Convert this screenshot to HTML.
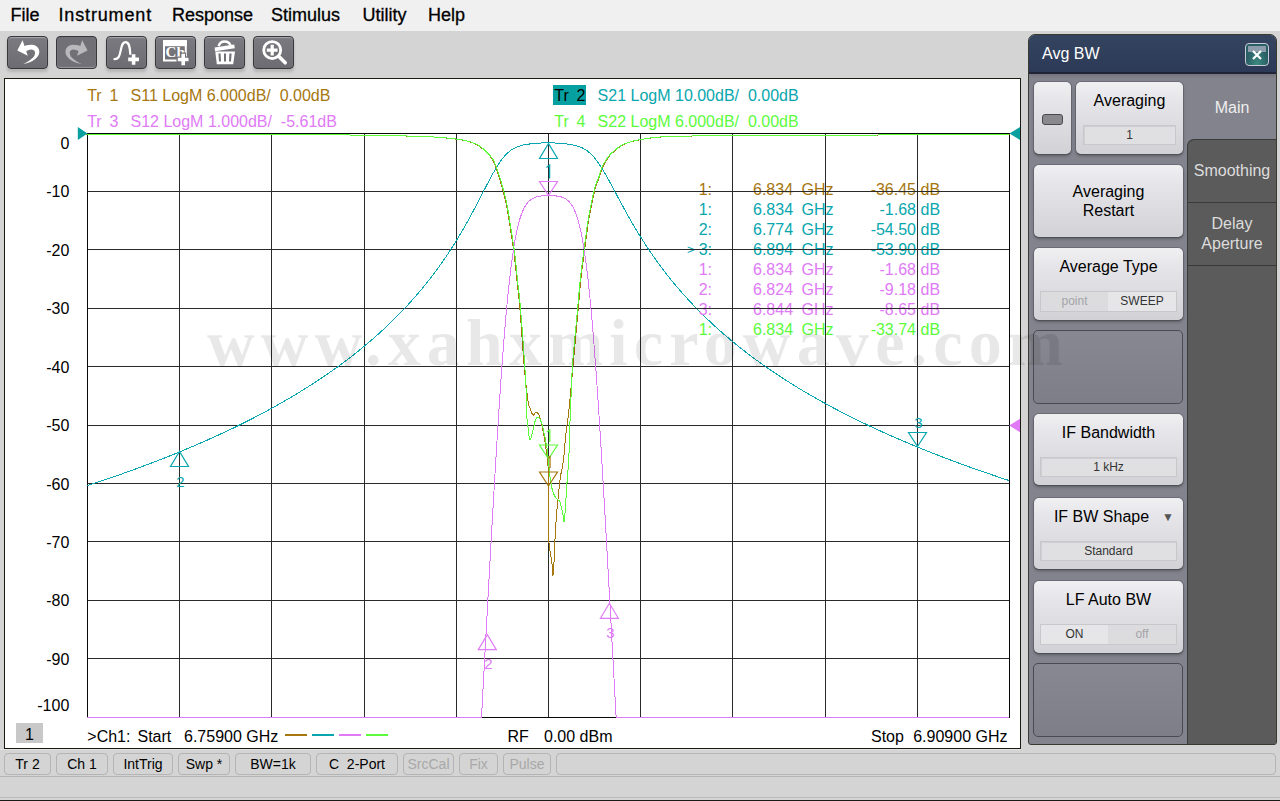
<!DOCTYPE html>
<html><head><meta charset="utf-8"><style>
*{margin:0;padding:0;box-sizing:border-box}
html,body{width:1280px;height:801px;overflow:hidden;background:#d4d4d4;font-family:"Liberation Sans",sans-serif}
.a{position:absolute}
#menu{left:0;top:0;width:1280px;height:31px;background:#f0f0f0}
#menu span{position:absolute;top:5px;font-size:18px;color:#000;line-height:20px;-webkit-text-stroke:0.3px #000}
.tb{position:absolute;top:36px;width:41px;height:33px;border-radius:4px;background:linear-gradient(#7a7a80,#6c6c72);border:1px solid #38383c;box-shadow:inset 0 1px 1px rgba(255,255,255,.35),0 3px 3px rgba(0,0,0,.15)}
.tbd{background:#707076;box-shadow:inset 0 -1px 1px rgba(255,255,255,.3)}
#chart{left:4px;top:78px;width:1017px;height:671px;background:#fff;border:1px solid #1a1a10}
#panel{left:1028px;top:34px;width:249px;height:711px;background:#82838c;border:1px solid #3a3a30;border-radius:7px 7px 3px 3px;overflow:hidden}
#hdr{left:0;top:0;width:247px;height:39px;background:linear-gradient(#34445f,#2c3a57);border-bottom:2px solid #1f2536;box-shadow:0 2px 3px rgba(0,0,0,.12)}
#tabs{left:158px;top:104px;width:89px;height:606px;background:#5b5b5b;border-left:1px solid #3a3a3a;border-top:1px solid #3a3a3a;border-radius:7px 0 0 0}
.btn{position:absolute;background:linear-gradient(#f0f0f3,#e6e6ea 25%,#d2d2d6);border-radius:5px;box-shadow:0 0 0 1px rgba(70,70,80,.35),0 1px 0 #55565c,0 2px 3px rgba(0,0,0,.3);color:#000;font-size:16px;text-align:center}
.emp{position:absolute;border:1px solid #4a4b50;border-radius:5px;background:linear-gradient(#878891,#7d7e87)}
.val{position:absolute;left:7px;width:93px;height:20px;background:#e0e0e2;border:1px solid #c8c8cc;box-shadow:inset 1px 1px 0 rgba(0,0,0,.07);font-size:12px;line-height:18px;color:#333}
.sb{position:absolute;top:753px;height:22px;border:1px solid #b4b4b4;border-radius:4px;font-size:14px;line-height:21px;text-align:center;color:#000;background:#d4d4d4}
</style></head><body>
<div id="menu" class="a"><span style="left:10.5px">File</span><span style="left:58.5px;letter-spacing:0.85px">Instrument</span><span style="left:172px">Response</span><span style="left:271px">Stimulus</span><span style="left:362.5px">Utility</span><span style="left:428px">Help</span></div>
<div class="tb" style="left:7px"></div><div class="tb" style="left:106px"></div><div class="tb" style="left:155px"></div><div class="tb" style="left:204px"></div><div class="tb" style="left:253px"></div><div class="tb tbd" style="left:56px"></div><svg class="a" style="left:0;top:0" width="300" height="80" viewBox="0 0 300 80"><path d="M17.3 50.4 L22.6 40.3 L27.8 55.8 Z" fill="#fff"/><path d="M22.5 47.2 C29 43.5 37.5 43.8 39.2 50.5 C40.5 56.5 33 62.5 23 64.2 C31 60.2 35.5 56.5 35 52.2 C34.3 48.8 30 48.6 25.5 51.5 Z" fill="#fff"/><g transform="translate(104.8,0) scale(-1,1)" fill="#b9b9bd"><path d="M17.3 50.4 L22.6 40.3 L27.8 55.8 Z"/><path d="M22.5 47.2 C29 43.5 37.5 43.8 39.2 50.5 C40.5 56.5 33 62.5 23 64.2 C31 60.2 35.5 56.5 35 52.2 C34.3 48.8 30 48.6 25.5 51.5 Z"/></g><path d="M114.5 59.2 C119 59 119.8 55 120.8 50 C121.8 45 122.5 42.2 125.5 42.2 C129 42.2 129.8 46 130.3 54" fill="none" stroke="#fff" stroke-width="2.2" stroke-linecap="round"/><path d="M128.2 57.6 H139 V61.2 H128.2 Z M131.8 54.2 H135.4 V64.8 H131.8 Z" fill="#fff" stroke="#6c6c72" stroke-width="0"/><path d="M164 41 H185.8 V57 M177 60.6 H164 V41" fill="none" stroke="#fff" stroke-width="2"/><rect x="163" y="40" width="23.8" height="6.2" fill="#fff"/><text x="165.6" y="57.2" font-family="'Liberation Serif',serif" font-weight="bold" font-size="15" fill="#fff">Ch</text><path d="M176.5 56.5 H189.8 V62.5 H176.5 Z M180.3 52.5 H186 V66.5 H180.3 Z" fill="#707076"/><path d="M177.8 57.7 H188.5 V61.3 H177.8 Z M181.4 53.8 H185 V65.2 H181.4 Z" fill="#fff"/><path d="M218.6 46.2 C219.5 42.6 221.8 41.5 224.5 41.5 C227.5 41.5 229.6 42.4 230.4 45.3" fill="none" stroke="#fff" stroke-width="2.4"/><path d="M214.6 47.6 L234.2 44.6 L234.8 48.2 L215 51.2 Z" fill="#fff"/><path d="M215.3 51.6 H235 L233.2 64.2 H216.8 Z" fill="#fff"/><path d="M218.4 53.6 H220.6 L221 61.6 H219 Z M224 53.6 H226 V61.6 H224 Z M229.4 53.6 H231.6 L231 61.6 H229 Z" fill="#707076"/><circle cx="272.2" cy="50.1" r="8.5" fill="none" stroke="#fff" stroke-width="2.8"/><path d="M279.2 56.8 L285.2 62.8" stroke="#fff" stroke-width="3.6" stroke-linecap="round"/><path d="M266.8 48.5 H277.6 V51.7 H266.8 Z M270.6 44.7 H273.8 V55.5 H270.6 Z" fill="#fff"/></svg>
<div id="chart" class="a"></div>
<svg width="1280" height="801" viewBox="0 0 1280 801" style="position:absolute;left:0;top:0" font-family='"Liberation Sans", sans-serif'>
<path d="M87.5 133 V718 M179.5 133 V718 M271.5 133 V718 M364.5 133 V718 M456.5 133 V718 M548.5 133 V718 M640.5 133 V718 M732.5 133 V718 M825.5 133 V718 M917.5 133 V718 M1009.5 133 V718 M87 133.5 H1010 M87 191.5 H1010 M87 249.5 H1010 M87 308.5 H1010 M87 366.5 H1010 M87 425.5 H1010 M87 483.5 H1010 M87 541.5 H1010 M87 600.5 H1010 M87 658.5 H1010 M87 717.5 H1010" stroke="#2a2a2a" stroke-width="1" fill="none" shape-rendering="crispEdges"/>
<path d="M87.5 133 V718 M1009.5 133 V718 M87 133.5 H1010 M87 717.5 H1010" stroke="#080808" stroke-width="1" fill="none" shape-rendering="crispEdges"/>
<polyline points="86.4,134.5 102.0,134.5 124.1,134.5 149.7,134.5 175.8,134.5 199.4,134.5 220.2,134.5 240.3,134.5 260.0,134.5 279.6,134.5 299.4,134.6 320.2,134.7 341.8,134.9 363.0,135.2 382.6,135.5 399.4,135.8 413.0,136.2 424.2,136.6 433.6,137.0 441.8,137.6 449.4,138.3 456.2,139.1 461.7,139.9 466.3,140.9 470.4,142.1 474.4,143.6 478.2,145.6 481.6,148.0 484.5,150.5 487.1,153.1 489.4,155.5 491.2,157.6 492.4,159.4 493.4,161.3 494.3,163.4 495.4,166.0 496.6,169.2 497.8,172.9 499.1,176.9 500.3,181.0 501.4,185.0 502.5,188.8 503.5,192.4 504.4,196.2 505.4,200.3 506.4,205.0 507.4,210.5 508.5,216.7 509.5,223.2 510.5,229.4 511.4,235.0 512.1,239.7 512.8,243.9 513.3,247.8 513.9,251.8 514.4,256.0 514.9,260.5 515.4,265.2 515.9,269.9 516.4,274.9 516.9,280.0 517.4,284.9 518.0,289.7 518.6,294.8 519.2,300.8 519.9,308.5 520.7,318.6 521.6,330.7 522.5,343.6 523.4,355.9 524.2,366.4 525.0,375.1 525.8,382.8 526.6,389.6 527.3,395.3 527.9,400.0 528.4,403.3 528.8,405.1 529.1,406.1 529.5,406.9 529.9,408.0 530.4,409.6 531.0,411.3 531.7,412.9 532.3,414.2 532.9,415.0 533.5,415.0 534.1,414.4 534.7,413.5 535.3,412.7 535.9,412.4 536.5,412.4 537.1,412.5 537.6,412.8 538.2,413.6 538.9,415.0 539.7,417.2 540.5,420.0 541.3,423.2 542.1,426.6 542.9,430.0 543.6,433.4 544.2,437.1 544.8,440.8 545.4,444.5 545.9,448.0 546.4,451.2 546.8,454.3 547.3,457.3 547.6,460.5 547.9,464.0 548.1,468.0 548.2,472.4 548.3,476.9 548.3,481.2 548.4,485.0 548.5,487.8 548.6,489.8 548.7,491.7 548.8,494.5 548.9,499.0 548.9,506.0 548.8,514.9 548.7,524.5 548.7,533.6 548.9,541.0 549.3,546.4 549.9,550.7 550.5,554.2 551.2,557.4 551.7,560.6 552.1,564.6 552.4,569.1 552.7,573.0 553.0,575.3 553.3,575.0 553.6,571.2 553.9,564.5 554.3,556.3 554.6,548.1 554.9,541.0 555.2,535.1 555.5,529.5 555.9,524.3 556.2,519.4 556.5,515.0 556.8,511.3 557.1,508.2 557.3,505.4 557.6,502.5 558.0,499.0 558.4,494.7 558.9,490.0 559.5,485.0 560.0,480.3 560.6,476.0 561.2,472.5 561.8,469.6 562.4,466.8 562.9,463.7 563.5,460.0 564.0,455.4 564.5,450.2 564.9,444.7 565.4,439.2 565.9,434.0 566.4,429.4 567.0,425.2 567.6,420.9 568.2,416.0 568.9,410.0 569.6,402.8 570.4,394.7 571.2,385.8 572.1,376.3 573.0,366.4 574.0,355.3 575.1,342.9 576.3,330.2 577.3,318.4 578.2,308.5 578.9,300.9 579.4,295.1 579.8,290.1 580.2,285.3 580.8,280.0 581.5,274.0 582.2,267.9 583.0,261.8 583.8,255.8 584.6,250.0 585.3,244.3 586.1,238.6 586.8,233.1 587.5,228.0 588.1,223.6 588.7,220.1 589.1,217.3 589.6,214.9 590.1,212.6 590.6,210.0 591.2,207.0 591.8,203.9 592.5,200.7 593.1,197.7 593.7,195.0 594.2,192.6 594.7,190.5 595.2,188.6 595.7,186.8 596.2,185.0 596.8,183.4 597.4,182.0 598.0,180.6 598.6,179.1 599.3,177.4 600.0,175.4 600.7,173.1 601.4,170.8 602.2,168.4 603.1,166.2 604.2,164.0 605.5,161.9 606.8,159.8 608.1,157.9 609.3,156.2 610.3,154.9 611.3,153.9 612.2,153.0 613.2,152.2 614.3,151.2 615.6,150.1 617.1,148.9 618.6,147.7 620.2,146.6 621.8,145.6 623.5,144.7 625.2,143.9 626.9,143.2 628.7,142.5 630.6,141.9 632.4,141.4 634.3,140.9 636.2,140.5 638.3,140.1 640.6,139.7 643.1,139.2 645.8,138.8 648.6,138.3 651.9,137.9 655.6,137.5 659.1,137.2 662.2,136.9 666.2,136.6 671.9,136.4 680.6,136.2 692.9,136.0 708.2,135.9 725.2,135.8 743.1,135.7 760.6,135.6 778.3,135.5 796.8,135.5 815.6,135.4 833.7,135.4 850.6,135.3 865.6,135.2 879.1,135.0 892.2,134.9 905.7,134.7 920.6,134.6 938.6,134.5 959.1,134.5 979.5,134.5 997.2,134.5 1009.6,134.5" fill="none" stroke="#a6760f" stroke-width="1" shape-rendering="crispEdges"/>
<polyline points="87.0,485.8 88.0,485.4 89.0,485.1 90.0,484.8 91.0,484.5 92.0,484.1 93.0,483.8 94.0,483.5 95.0,483.1 96.0,482.8 97.0,482.5 98.0,482.1 99.0,481.8 100.0,481.5 101.0,481.1 102.0,480.8 103.0,480.4 104.0,480.1 105.0,479.8 106.0,479.4 107.0,479.1 108.0,478.7 109.0,478.4 110.0,478.0 111.0,477.7 112.0,477.4 113.0,477.0 114.0,476.7 115.0,476.3 116.0,476.0 117.0,475.6 118.0,475.3 119.0,474.9 120.0,474.6 121.0,474.2 122.0,473.9 123.0,473.5 124.0,473.1 125.0,472.8 126.0,472.4 127.0,472.1 128.0,471.7 129.0,471.4 130.0,471.0 131.0,470.6 132.0,470.3 133.0,469.9 134.0,469.5 135.0,469.2 136.0,468.8 137.0,468.4 138.0,468.1 139.0,467.7 140.0,467.3 141.0,467.0 142.0,466.6 143.0,466.2 144.0,465.8 145.0,465.5 146.0,465.1 147.0,464.7 148.0,464.3 149.0,464.0 150.0,463.6 151.0,463.2 152.0,462.8 153.0,462.4 154.0,462.1 155.0,461.7 156.0,461.3 157.0,460.9 158.0,460.5 159.0,460.1 160.0,459.7 161.0,459.3 162.0,459.0 163.0,458.6 164.0,458.2 165.0,457.8 166.0,457.4 167.0,457.0 168.0,456.6 169.0,456.2 170.0,455.8 171.0,455.4 172.0,455.0 173.0,454.6 174.0,454.2 175.0,453.8 176.0,453.4 177.0,453.0 178.0,452.5 179.0,452.1 180.0,451.7 181.0,451.3 182.0,450.9 183.0,450.5 184.0,450.1 185.0,449.7 186.0,449.2 187.0,448.8 188.0,448.4 189.0,448.0 190.0,447.6 191.0,447.1 192.0,446.7 193.0,446.3 194.0,445.9 195.0,445.4 196.0,445.0 197.0,444.6 198.0,444.1 199.0,443.7 200.0,443.3 201.0,442.8 202.0,442.4 203.0,442.0 204.0,441.5 205.0,441.1 206.0,440.6 207.0,440.2 208.0,439.7 209.0,439.3 210.0,438.8 211.0,438.4 212.0,437.9 213.0,437.5 214.0,437.0 215.0,436.6 216.0,436.1 217.0,435.7 218.0,435.2 219.0,434.8 220.0,434.3 221.0,433.8 222.0,433.4 223.0,432.9 224.0,432.4 225.0,432.0 226.0,431.5 227.0,431.0 228.0,430.6 229.0,430.1 230.0,429.6 231.0,429.1 232.0,428.6 233.0,428.2 234.0,427.7 235.0,427.2 236.0,426.7 237.0,426.2 238.0,425.7 239.0,425.2 240.0,424.8 241.0,424.3 242.0,423.8 243.0,423.3 244.0,422.8 245.0,422.3 246.0,421.8 247.0,421.3 248.0,420.8 249.0,420.3 250.0,419.7 251.0,419.2 252.0,418.7 253.0,418.2 254.0,417.7 255.0,417.2 256.0,416.7 257.0,416.1 258.0,415.6 259.0,415.1 260.0,414.6 261.0,414.0 262.0,413.5 263.0,413.0 264.0,412.4 265.0,411.9 266.0,411.4 267.0,410.8 268.0,410.3 269.0,409.7 270.0,409.2 271.0,408.7 272.0,408.1 273.0,407.6 274.0,407.0 275.0,406.4 276.0,405.9 277.0,405.3 278.0,404.8 279.0,404.2 280.0,403.6 281.0,403.1 282.0,402.5 283.0,401.9 284.0,401.3 285.0,400.8 286.0,400.2 287.0,399.6 288.0,399.0 289.0,398.4 290.0,397.9 291.0,397.3 292.0,396.7 293.0,396.1 294.0,395.5 295.0,394.9 296.0,394.3 297.0,393.7 298.0,393.1 299.0,392.5 300.0,391.8 301.0,391.2 302.0,390.6 303.0,390.0 304.0,389.4 305.0,388.7 306.0,388.1 307.0,387.5 308.0,386.9 309.0,386.2 310.0,385.6 311.0,384.9 312.0,384.3 313.0,383.7 314.0,383.0 315.0,382.4 316.0,381.7 317.0,381.0 318.0,380.4 319.0,379.7 320.0,379.1 321.0,378.4 322.0,377.7 323.0,377.0 324.0,376.4 325.0,375.7 326.0,375.0 327.0,374.3 328.0,373.6 329.0,372.9 330.0,372.2 331.0,371.5 332.0,370.8 333.0,370.1 334.0,369.4 335.0,368.7 336.0,368.0 337.0,367.3 338.0,366.5 339.0,365.8 340.0,365.1 341.0,364.4 342.0,363.6 343.0,362.9 344.0,362.1 345.0,361.4 346.0,360.6 347.0,359.9 348.0,359.1 349.0,358.3 350.0,357.6 351.0,356.8 352.0,356.0 353.0,355.3 354.0,354.5 355.0,353.7 356.0,352.9 357.0,352.1 358.0,351.3 359.0,350.5 360.0,349.7 361.0,348.9 362.0,348.1 363.0,347.2 364.0,346.4 365.0,345.6 366.0,344.7 367.0,343.9 368.0,343.1 369.0,342.2 370.0,341.4 371.0,340.5 372.0,339.6 373.0,338.8 374.0,337.9 375.0,337.0 376.0,336.1 377.0,335.2 378.0,334.4 379.0,333.5 380.0,332.5 381.0,331.6 382.0,330.7 383.0,329.8 384.0,328.9 385.0,327.9 386.0,327.0 387.0,326.1 388.0,325.1 389.0,324.2 390.0,323.2 391.0,322.2 392.0,321.2 393.0,320.3 394.0,319.3 395.0,318.3 396.0,317.3 397.0,316.3 398.0,315.3 399.0,314.3 400.0,313.2 401.0,312.2 402.0,311.1 403.0,310.1 404.0,309.0 405.0,308.0 406.0,306.9 407.0,305.8 408.0,304.8 409.0,303.7 410.0,302.6 411.0,301.5 412.0,300.3 413.0,299.2 414.0,298.1 415.0,296.9 416.0,295.8 417.0,294.6 418.0,293.5 419.0,292.3 420.0,291.1 421.0,289.9 422.0,288.7 423.0,287.5 424.0,286.3 425.0,285.0 426.0,283.8 427.0,282.5 428.0,281.3 429.0,280.0 430.0,278.7 431.0,277.4 432.0,276.1 433.0,274.8 434.0,273.5 435.0,272.2 436.0,270.8 437.0,269.4 438.0,268.1 439.0,266.7 440.0,265.3 441.0,263.9 442.0,262.5 443.0,261.0 444.0,259.6 445.0,258.1 446.0,256.7 447.0,255.2 448.0,253.7 449.0,252.2 450.0,250.6 451.0,249.1 452.0,247.5 453.0,246.0 454.0,244.4 455.0,242.8 456.0,241.2 457.0,239.6 458.0,237.9 459.0,236.3 460.0,234.6 461.0,232.9 462.0,231.2 463.0,229.5 464.0,227.7 465.0,226.0 466.0,224.2 467.0,222.5 468.0,220.7 469.0,218.9 470.0,217.0 471.0,215.2 472.0,213.4 473.0,211.5 474.0,209.6 475.0,207.7 476.0,205.8 477.0,203.9 478.0,202.0 479.0,200.1 480.0,198.2 481.0,196.2 482.0,194.3 483.0,192.3 484.0,190.4 485.0,188.5 486.0,186.5 487.0,184.6 488.0,182.7 489.0,180.8 490.0,178.9 491.0,177.1 492.0,175.2 493.0,173.4 494.0,171.7 495.0,169.9 496.0,168.3 497.0,166.6 498.0,165.0 499.0,163.5 500.0,162.0 501.0,160.6 502.0,159.3 503.0,158.0 504.0,156.8 505.0,155.6 506.0,154.6 507.0,153.6 508.0,152.6 509.0,151.8 510.0,151.0 511.0,150.2 512.0,149.6 513.0,148.9 514.0,148.4 515.0,147.9 516.0,147.4 517.0,147.0 518.0,146.6 519.0,146.2 520.0,145.9 521.0,145.6 522.0,145.4 523.0,145.1 524.0,144.9 525.0,144.7 526.0,144.5 527.0,144.4 528.0,144.2 529.0,144.1 530.0,143.9 531.0,143.8 532.0,143.7 533.0,143.6 534.0,143.5 535.0,143.4 536.0,143.3 537.0,143.2 538.0,143.2 539.0,143.1 540.0,143.0 541.0,143.0 542.0,142.9 543.0,142.9 544.0,142.9 545.0,142.8 546.0,142.8 547.0,142.8 548.0,142.8 549.0,142.8 550.0,142.8 551.0,142.8 552.0,142.9 553.0,142.9 554.0,142.9 555.0,143.0 556.0,143.0 557.0,143.1 558.0,143.1 559.0,143.2 560.0,143.3 561.0,143.4 562.0,143.5 563.0,143.5 564.0,143.6 565.0,143.8 566.0,143.9 567.0,144.0 568.0,144.1 569.0,144.3 570.0,144.4 571.0,144.6 572.0,144.8 573.0,145.0 574.0,145.2 575.0,145.4 576.0,145.7 577.0,145.9 578.0,146.2 579.0,146.6 580.0,146.9 581.0,147.3 582.0,147.8 583.0,148.3 584.0,148.8 585.0,149.4 586.0,150.0 587.0,150.7 588.0,151.5 589.0,152.3 590.0,153.1 591.0,154.1 592.0,155.1 593.0,156.1 594.0,157.3 595.0,158.5 596.0,159.7 597.0,161.1 598.0,162.4 599.0,163.9 600.0,165.4 601.0,166.9 602.0,168.5 603.0,170.1 604.0,171.8 605.0,173.5 606.0,175.3 607.0,177.0 608.0,178.8 609.0,180.6 610.0,182.5 611.0,184.3 612.0,186.2 613.0,188.0 614.0,189.9 615.0,191.8 616.0,193.6 617.0,195.5 618.0,197.4 619.0,199.2 620.0,201.1 621.0,203.0 622.0,204.8 623.0,206.6 624.0,208.5 625.0,210.3 626.0,212.1 627.0,213.9 628.0,215.7 629.0,217.4 630.0,219.2 631.0,220.9 632.0,222.7 633.0,224.4 634.0,226.1 635.0,227.8 636.0,229.4 637.0,231.1 638.0,232.8 639.0,234.4 640.0,236.0 641.0,237.6 642.0,239.2 643.0,240.8 644.0,242.3 645.0,243.9 646.0,245.4 647.0,246.9 648.0,248.4 649.0,249.9 650.0,251.4 651.0,252.9 652.0,254.3 653.0,255.8 654.0,257.2 655.0,258.6 656.0,260.0 657.0,261.4 658.0,262.8 659.0,264.2 660.0,265.5 661.0,266.9 662.0,268.2 663.0,269.5 664.0,270.8 665.0,272.1 666.0,273.4 667.0,274.7 668.0,276.0 669.0,277.2 670.0,278.5 671.0,279.7 672.0,281.0 673.0,282.2 674.0,283.4 675.0,284.6 676.0,285.8 677.0,287.0 678.0,288.1 679.0,289.3 680.0,290.5 681.0,291.6 682.0,292.8 683.0,293.9 684.0,295.0 685.0,296.1 686.0,297.2 687.0,298.3 688.0,299.4 689.0,300.5 690.0,301.6 691.0,302.7 692.0,303.7 693.0,304.8 694.0,305.8 695.0,306.9 696.0,307.9 697.0,308.9 698.0,309.9 699.0,311.0 700.0,312.0 701.0,313.0 702.0,314.0 703.0,314.9 704.0,315.9 705.0,316.9 706.0,317.9 707.0,318.8 708.0,319.8 709.0,320.7 710.0,321.7 711.0,322.6 712.0,323.6 713.0,324.5 714.0,325.4 715.0,326.3 716.0,327.2 717.0,328.1 718.0,329.0 719.0,329.9 720.0,330.8 721.0,331.7 722.0,332.6 723.0,333.4 724.0,334.3 725.0,335.2 726.0,336.0 727.0,336.9 728.0,337.7 729.0,338.6 730.0,339.4 731.0,340.3 732.0,341.1 733.0,341.9 734.0,342.7 735.0,343.6 736.0,344.4 737.0,345.2 738.0,346.0 739.0,346.8 740.0,347.6 741.0,348.4 742.0,349.2 743.0,349.9 744.0,350.7 745.0,351.5 746.0,352.3 747.0,353.0 748.0,353.8 749.0,354.6 750.0,355.3 751.0,356.1 752.0,356.8 753.0,357.6 754.0,358.3 755.0,359.0 756.0,359.8 757.0,360.5 758.0,361.2 759.0,361.9 760.0,362.7 761.0,363.4 762.0,364.1 763.0,364.8 764.0,365.5 765.0,366.2 766.0,366.9 767.0,367.6 768.0,368.3 769.0,369.0 770.0,369.7 771.0,370.4 772.0,371.1 773.0,371.7 774.0,372.4 775.0,373.1 776.0,373.7 777.0,374.4 778.0,375.1 779.0,375.7 780.0,376.4 781.0,377.0 782.0,377.7 783.0,378.3 784.0,379.0 785.0,379.6 786.0,380.3 787.0,380.9 788.0,381.5 789.0,382.2 790.0,382.8 791.0,383.4 792.0,384.1 793.0,384.7 794.0,385.3 795.0,385.9 796.0,386.5 797.0,387.1 798.0,387.8 799.0,388.4 800.0,389.0 801.0,389.6 802.0,390.2 803.0,390.8 804.0,391.4 805.0,392.0 806.0,392.5 807.0,393.1 808.0,393.7 809.0,394.3 810.0,394.9 811.0,395.5 812.0,396.0 813.0,396.6 814.0,397.2 815.0,397.8 816.0,398.3 817.0,398.9 818.0,399.5 819.0,400.0 820.0,400.6 821.0,401.1 822.0,401.7 823.0,402.2 824.0,402.8 825.0,403.3 826.0,403.9 827.0,404.4 828.0,405.0 829.0,405.5 830.0,406.1 831.0,406.6 832.0,407.1 833.0,407.7 834.0,408.2 835.0,408.7 836.0,409.3 837.0,409.8 838.0,410.3 839.0,410.8 840.0,411.4 841.0,411.9 842.0,412.4 843.0,412.9 844.0,413.4 845.0,413.9 846.0,414.4 847.0,415.0 848.0,415.5 849.0,416.0 850.0,416.5 851.0,417.0 852.0,417.5 853.0,418.0 854.0,418.5 855.0,419.0 856.0,419.5 857.0,419.9 858.0,420.4 859.0,420.9 860.0,421.4 861.0,421.9 862.0,422.4 863.0,422.9 864.0,423.3 865.0,423.8 866.0,424.3 867.0,424.8 868.0,425.3 869.0,425.7 870.0,426.2 871.0,426.7 872.0,427.1 873.0,427.6 874.0,428.1 875.0,428.5 876.0,429.0 877.0,429.5 878.0,429.9 879.0,430.4 880.0,430.8 881.0,431.3 882.0,431.8 883.0,432.2 884.0,432.7 885.0,433.1 886.0,433.6 887.0,434.0 888.0,434.4 889.0,434.9 890.0,435.3 891.0,435.8 892.0,436.2 893.0,436.7 894.0,437.1 895.0,437.5 896.0,438.0 897.0,438.4 898.0,438.8 899.0,439.3 900.0,439.7 901.0,440.1 902.0,440.6 903.0,441.0 904.0,441.4 905.0,441.8 906.0,442.3 907.0,442.7 908.0,443.1 909.0,443.5 910.0,444.0 911.0,444.4 912.0,444.8 913.0,445.2 914.0,445.6 915.0,446.0 916.0,446.4 917.0,446.9 918.0,447.3 919.0,447.7 920.0,448.1 921.0,448.5 922.0,448.9 923.0,449.3 924.0,449.7 925.0,450.1 926.0,450.5 927.0,450.9 928.0,451.3 929.0,451.7 930.0,452.1 931.0,452.5 932.0,452.9 933.0,453.3 934.0,453.7 935.0,454.1 936.0,454.5 937.0,454.8 938.0,455.2 939.0,455.6 940.0,456.0 941.0,456.4 942.0,456.8 943.0,457.2 944.0,457.5 945.0,457.9 946.0,458.3 947.0,458.7 948.0,459.1 949.0,459.4 950.0,459.8 951.0,460.2 952.0,460.6 953.0,460.9 954.0,461.3 955.0,461.7 956.0,462.1 957.0,462.4 958.0,462.8 959.0,463.2 960.0,463.5 961.0,463.9 962.0,464.3 963.0,464.6 964.0,465.0 965.0,465.4 966.0,465.7 967.0,466.1 968.0,466.4 969.0,466.8 970.0,467.2 971.0,467.5 972.0,467.9 973.0,468.2 974.0,468.6 975.0,468.9 976.0,469.3 977.0,469.6 978.0,470.0 979.0,470.3 980.0,470.7 981.0,471.0 982.0,471.4 983.0,471.7 984.0,472.1 985.0,472.4 986.0,472.8 987.0,473.1 988.0,473.5 989.0,473.8 990.0,474.1 991.0,474.5 992.0,474.8 993.0,475.2 994.0,475.5 995.0,475.8 996.0,476.2 997.0,476.5 998.0,476.9 999.0,477.2 1000.0,477.5 1001.0,477.9 1002.0,478.2 1003.0,478.5 1004.0,478.9 1005.0,479.2 1006.0,479.5 1007.0,479.8 1008.0,480.2 1009.0,480.5" fill="none" stroke="#08a6ae" stroke-width="1" shape-rendering="crispEdges"/>
<polyline points="87.0,717.0 87.5,717.0 88.0,717.0 88.5,717.0 89.0,717.0 89.5,717.0 90.0,717.0 90.5,717.0 91.0,717.0 91.5,717.0 92.0,717.0 92.5,717.0 93.0,717.0 93.5,717.0 94.0,717.0 94.5,717.0 95.0,717.0 95.5,717.0 96.0,717.0 96.5,717.0 97.0,717.0 97.5,717.0 98.0,717.0 98.5,717.0 99.0,717.0 99.5,717.0 100.0,717.0 100.5,717.0 101.0,717.0 101.5,717.0 102.0,717.0 102.5,717.0 103.0,717.0 103.5,717.0 104.0,717.0 104.5,717.0 105.0,717.0 105.5,717.0 106.0,717.0 106.5,717.0 107.0,717.0 107.5,717.0 108.0,717.0 108.5,717.0 109.0,717.0 109.5,717.0 110.0,717.0 110.5,717.0 111.0,717.0 111.5,717.0 112.0,717.0 112.5,717.0 113.0,717.0 113.5,717.0 114.0,717.0 114.5,717.0 115.0,717.0 115.5,717.0 116.0,717.0 116.5,717.0 117.0,717.0 117.5,717.0 118.0,717.0 118.5,717.0 119.0,717.0 119.5,717.0 120.0,717.0 120.5,717.0 121.0,717.0 121.5,717.0 122.0,717.0 122.5,717.0 123.0,717.0 123.5,717.0 124.0,717.0 124.5,717.0 125.0,717.0 125.5,717.0 126.0,717.0 126.5,717.0 127.0,717.0 127.5,717.0 128.0,717.0 128.5,717.0 129.0,717.0 129.5,717.0 130.0,717.0 130.5,717.0 131.0,717.0 131.5,717.0 132.0,717.0 132.5,717.0 133.0,717.0 133.5,717.0 134.0,717.0 134.5,717.0 135.0,717.0 135.5,717.0 136.0,717.0 136.5,717.0 137.0,717.0 137.5,717.0 138.0,717.0 138.5,717.0 139.0,717.0 139.5,717.0 140.0,717.0 140.5,717.0 141.0,717.0 141.5,717.0 142.0,717.0 142.5,717.0 143.0,717.0 143.5,717.0 144.0,717.0 144.5,717.0 145.0,717.0 145.5,717.0 146.0,717.0 146.5,717.0 147.0,717.0 147.5,717.0 148.0,717.0 148.5,717.0 149.0,717.0 149.5,717.0 150.0,717.0 150.5,717.0 151.0,717.0 151.5,717.0 152.0,717.0 152.5,717.0 153.0,717.0 153.5,717.0 154.0,717.0 154.5,717.0 155.0,717.0 155.5,717.0 156.0,717.0 156.5,717.0 157.0,717.0 157.5,717.0 158.0,717.0 158.5,717.0 159.0,717.0 159.5,717.0 160.0,717.0 160.5,717.0 161.0,717.0 161.5,717.0 162.0,717.0 162.5,717.0 163.0,717.0 163.5,717.0 164.0,717.0 164.5,717.0 165.0,717.0 165.5,717.0 166.0,717.0 166.5,717.0 167.0,717.0 167.5,717.0 168.0,717.0 168.5,717.0 169.0,717.0 169.5,717.0 170.0,717.0 170.5,717.0 171.0,717.0 171.5,717.0 172.0,717.0 172.5,717.0 173.0,717.0 173.5,717.0 174.0,717.0 174.5,717.0 175.0,717.0 175.5,717.0 176.0,717.0 176.5,717.0 177.0,717.0 177.5,717.0 178.0,717.0 178.5,717.0 179.0,717.0 179.5,717.0 180.0,717.0 180.5,717.0 181.0,717.0 181.5,717.0 182.0,717.0 182.5,717.0 183.0,717.0 183.5,717.0 184.0,717.0 184.5,717.0 185.0,717.0 185.5,717.0 186.0,717.0 186.5,717.0 187.0,717.0 187.5,717.0 188.0,717.0 188.5,717.0 189.0,717.0 189.5,717.0 190.0,717.0 190.5,717.0 191.0,717.0 191.5,717.0 192.0,717.0 192.5,717.0 193.0,717.0 193.5,717.0 194.0,717.0 194.5,717.0 195.0,717.0 195.5,717.0 196.0,717.0 196.5,717.0 197.0,717.0 197.5,717.0 198.0,717.0 198.5,717.0 199.0,717.0 199.5,717.0 200.0,717.0 200.5,717.0 201.0,717.0 201.5,717.0 202.0,717.0 202.5,717.0 203.0,717.0 203.5,717.0 204.0,717.0 204.5,717.0 205.0,717.0 205.5,717.0 206.0,717.0 206.5,717.0 207.0,717.0 207.5,717.0 208.0,717.0 208.5,717.0 209.0,717.0 209.5,717.0 210.0,717.0 210.5,717.0 211.0,717.0 211.5,717.0 212.0,717.0 212.5,717.0 213.0,717.0 213.5,717.0 214.0,717.0 214.5,717.0 215.0,717.0 215.5,717.0 216.0,717.0 216.5,717.0 217.0,717.0 217.5,717.0 218.0,717.0 218.5,717.0 219.0,717.0 219.5,717.0 220.0,717.0 220.5,717.0 221.0,717.0 221.5,717.0 222.0,717.0 222.5,717.0 223.0,717.0 223.5,717.0 224.0,717.0 224.5,717.0 225.0,717.0 225.5,717.0 226.0,717.0 226.5,717.0 227.0,717.0 227.5,717.0 228.0,717.0 228.5,717.0 229.0,717.0 229.5,717.0 230.0,717.0 230.5,717.0 231.0,717.0 231.5,717.0 232.0,717.0 232.5,717.0 233.0,717.0 233.5,717.0 234.0,717.0 234.5,717.0 235.0,717.0 235.5,717.0 236.0,717.0 236.5,717.0 237.0,717.0 237.5,717.0 238.0,717.0 238.5,717.0 239.0,717.0 239.5,717.0 240.0,717.0 240.5,717.0 241.0,717.0 241.5,717.0 242.0,717.0 242.5,717.0 243.0,717.0 243.5,717.0 244.0,717.0 244.5,717.0 245.0,717.0 245.5,717.0 246.0,717.0 246.5,717.0 247.0,717.0 247.5,717.0 248.0,717.0 248.5,717.0 249.0,717.0 249.5,717.0 250.0,717.0 250.5,717.0 251.0,717.0 251.5,717.0 252.0,717.0 252.5,717.0 253.0,717.0 253.5,717.0 254.0,717.0 254.5,717.0 255.0,717.0 255.5,717.0 256.0,717.0 256.5,717.0 257.0,717.0 257.5,717.0 258.0,717.0 258.5,717.0 259.0,717.0 259.5,717.0 260.0,717.0 260.5,717.0 261.0,717.0 261.5,717.0 262.0,717.0 262.5,717.0 263.0,717.0 263.5,717.0 264.0,717.0 264.5,717.0 265.0,717.0 265.5,717.0 266.0,717.0 266.5,717.0 267.0,717.0 267.5,717.0 268.0,717.0 268.5,717.0 269.0,717.0 269.5,717.0 270.0,717.0 270.5,717.0 271.0,717.0 271.5,717.0 272.0,717.0 272.5,717.0 273.0,717.0 273.5,717.0 274.0,717.0 274.5,717.0 275.0,717.0 275.5,717.0 276.0,717.0 276.5,717.0 277.0,717.0 277.5,717.0 278.0,717.0 278.5,717.0 279.0,717.0 279.5,717.0 280.0,717.0 280.5,717.0 281.0,717.0 281.5,717.0 282.0,717.0 282.5,717.0 283.0,717.0 283.5,717.0 284.0,717.0 284.5,717.0 285.0,717.0 285.5,717.0 286.0,717.0 286.5,717.0 287.0,717.0 287.5,717.0 288.0,717.0 288.5,717.0 289.0,717.0 289.5,717.0 290.0,717.0 290.5,717.0 291.0,717.0 291.5,717.0 292.0,717.0 292.5,717.0 293.0,717.0 293.5,717.0 294.0,717.0 294.5,717.0 295.0,717.0 295.5,717.0 296.0,717.0 296.5,717.0 297.0,717.0 297.5,717.0 298.0,717.0 298.5,717.0 299.0,717.0 299.5,717.0 300.0,717.0 300.5,717.0 301.0,717.0 301.5,717.0 302.0,717.0 302.5,717.0 303.0,717.0 303.5,717.0 304.0,717.0 304.5,717.0 305.0,717.0 305.5,717.0 306.0,717.0 306.5,717.0 307.0,717.0 307.5,717.0 308.0,717.0 308.5,717.0 309.0,717.0 309.5,717.0 310.0,717.0 310.5,717.0 311.0,717.0 311.5,717.0 312.0,717.0 312.5,717.0 313.0,717.0 313.5,717.0 314.0,717.0 314.5,717.0 315.0,717.0 315.5,717.0 316.0,717.0 316.5,717.0 317.0,717.0 317.5,717.0 318.0,717.0 318.5,717.0 319.0,717.0 319.5,717.0 320.0,717.0 320.5,717.0 321.0,717.0 321.5,717.0 322.0,717.0 322.5,717.0 323.0,717.0 323.5,717.0 324.0,717.0 324.5,717.0 325.0,717.0 325.5,717.0 326.0,717.0 326.5,717.0 327.0,717.0 327.5,717.0 328.0,717.0 328.5,717.0 329.0,717.0 329.5,717.0 330.0,717.0 330.5,717.0 331.0,717.0 331.5,717.0 332.0,717.0 332.5,717.0 333.0,717.0 333.5,717.0 334.0,717.0 334.5,717.0 335.0,717.0 335.5,717.0 336.0,717.0 336.5,717.0 337.0,717.0 337.5,717.0 338.0,717.0 338.5,717.0 339.0,717.0 339.5,717.0 340.0,717.0 340.5,717.0 341.0,717.0 341.5,717.0 342.0,717.0 342.5,717.0 343.0,717.0 343.5,717.0 344.0,717.0 344.5,717.0 345.0,717.0 345.5,717.0 346.0,717.0 346.5,717.0 347.0,717.0 347.5,717.0 348.0,717.0 348.5,717.0 349.0,717.0 349.5,717.0 350.0,717.0 350.5,717.0 351.0,717.0 351.5,717.0 352.0,717.0 352.5,717.0 353.0,717.0 353.5,717.0 354.0,717.0 354.5,717.0 355.0,717.0 355.5,717.0 356.0,717.0 356.5,717.0 357.0,717.0 357.5,717.0 358.0,717.0 358.5,717.0 359.0,717.0 359.5,717.0 360.0,717.0 360.5,717.0 361.0,717.0 361.5,717.0 362.0,717.0 362.5,717.0 363.0,717.0 363.5,717.0 364.0,717.0 364.5,717.0 365.0,717.0 365.5,717.0 366.0,717.0 366.5,717.0 367.0,717.0 367.5,717.0 368.0,717.0 368.5,717.0 369.0,717.0 369.5,717.0 370.0,717.0 370.5,717.0 371.0,717.0 371.5,717.0 372.0,717.0 372.5,717.0 373.0,717.0 373.5,717.0 374.0,717.0 374.5,717.0 375.0,717.0 375.5,717.0 376.0,717.0 376.5,717.0 377.0,717.0 377.5,717.0 378.0,717.0 378.5,717.0 379.0,717.0 379.5,717.0 380.0,717.0 380.5,717.0 381.0,717.0 381.5,717.0 382.0,717.0 382.5,717.0 383.0,717.0 383.5,717.0 384.0,717.0 384.5,717.0 385.0,717.0 385.5,717.0 386.0,717.0 386.5,717.0 387.0,717.0 387.5,717.0 388.0,717.0 388.5,717.0 389.0,717.0 389.5,717.0 390.0,717.0 390.5,717.0 391.0,717.0 391.5,717.0 392.0,717.0 392.5,717.0 393.0,717.0 393.5,717.0 394.0,717.0 394.5,717.0 395.0,717.0 395.5,717.0 396.0,717.0 396.5,717.0 397.0,717.0 397.5,717.0 398.0,717.0 398.5,717.0 399.0,717.0 399.5,717.0 400.0,717.0 400.5,717.0 401.0,717.0 401.5,717.0 402.0,717.0 402.5,717.0 403.0,717.0 403.5,717.0 404.0,717.0 404.5,717.0 405.0,717.0 405.5,717.0 406.0,717.0 406.5,717.0 407.0,717.0 407.5,717.0 408.0,717.0 408.5,717.0 409.0,717.0 409.5,717.0 410.0,717.0 410.5,717.0 411.0,717.0 411.5,717.0 412.0,717.0 412.5,717.0 413.0,717.0 413.5,717.0 414.0,717.0 414.5,717.0 415.0,717.0 415.5,717.0 416.0,717.0 416.5,717.0 417.0,717.0 417.5,717.0 418.0,717.0 418.5,717.0 419.0,717.0 419.5,717.0 420.0,717.0 420.5,717.0 421.0,717.0 421.5,717.0 422.0,717.0 422.5,717.0 423.0,717.0 423.5,717.0 424.0,717.0 424.5,717.0 425.0,717.0 425.5,717.0 426.0,717.0 426.5,717.0 427.0,717.0 427.5,717.0 428.0,717.0 428.5,717.0 429.0,717.0 429.5,717.0 430.0,717.0 430.5,717.0 431.0,717.0 431.5,717.0 432.0,717.0 432.5,717.0 433.0,717.0 433.5,717.0 434.0,717.0 434.5,717.0 435.0,717.0 435.5,717.0 436.0,717.0 436.5,717.0 437.0,717.0 437.5,717.0 438.0,717.0 438.5,717.0 439.0,717.0 439.5,717.0 440.0,717.0 440.5,717.0 441.0,717.0 441.5,717.0 442.0,717.0 442.5,717.0 443.0,717.0 443.5,717.0 444.0,717.0 444.5,717.0 445.0,717.0 445.5,717.0 446.0,717.0 446.5,717.0 447.0,717.0 447.5,717.0 448.0,717.0 448.5,717.0 449.0,717.0 449.5,717.0 450.0,717.0 450.5,717.0 451.0,717.0 451.5,717.0 452.0,717.0 452.5,717.0 453.0,717.0 453.5,717.0 454.0,717.0 454.5,717.0 455.0,717.0 455.5,717.0 456.0,717.0 456.5,717.0 457.0,717.0 457.5,717.0 458.0,717.0 458.5,717.0 459.0,717.0 459.5,717.0 460.0,717.0 460.5,717.0 461.0,717.0 461.5,717.0 462.0,717.0 462.5,717.0 463.0,717.0 463.5,717.0 464.0,717.0 464.5,717.0 465.0,717.0 465.5,717.0 466.0,717.0 466.5,717.0 467.0,717.0 467.5,717.0 468.0,717.0 468.5,717.0 469.0,717.0 469.5,717.0 470.0,717.0 470.5,717.0 471.0,717.0 471.5,717.0 472.0,717.0 472.5,717.0 473.0,717.0 473.5,717.0 474.0,717.0 474.5,717.0 475.0,717.0 475.5,717.0 476.0,717.0 476.5,717.0 477.0,717.0 477.5,717.0 478.0,717.0 478.5,717.0 479.0,717.0 479.5,717.0 480.0,717.0 480.5,717.0 481.0,717.0 481.5,717.0 482.0,707.9 482.5,698.7 483.0,689.5 483.5,680.2 484.0,671.0 484.5,661.8 485.0,652.6 485.5,643.4 486.0,634.2 486.5,625.0 487.0,615.9 487.5,606.7 488.0,597.6 488.5,588.5 489.0,579.4 489.5,570.3 490.0,561.3 490.5,552.3 491.0,543.4 491.5,534.5 492.0,525.6 492.5,516.8 493.0,508.1 493.5,499.4 494.0,490.8 494.5,482.2 495.0,473.8 495.5,465.4 496.0,457.1 496.5,448.9 497.0,440.7 497.5,432.7 498.0,424.8 498.5,417.0 499.0,409.3 499.5,401.7 500.0,394.2 500.5,386.9 501.0,379.7 501.5,372.6 502.0,365.7 502.5,358.9 503.0,352.2 503.5,345.7 504.0,339.4 504.5,333.2 505.0,327.1 505.5,321.3 506.0,315.5 506.5,310.0 507.0,304.6 507.5,299.4 508.0,294.3 508.5,289.4 509.0,284.7 509.5,280.1 510.0,275.7 510.5,271.5 511.0,267.4 511.5,263.5 512.0,259.8 512.5,256.2 513.0,252.7 513.5,249.4 514.0,246.3 514.5,243.3 515.0,240.4 515.5,237.7 516.0,235.1 516.5,232.6 517.0,230.3 517.5,228.1 518.0,226.0 518.5,224.0 519.0,222.1 519.5,220.3 520.0,218.6 520.5,217.1 521.0,215.6 521.5,214.2 522.0,212.9 522.5,211.6 523.0,210.5 523.5,209.4 524.0,208.4 524.5,207.4 525.0,206.5 525.5,205.7 526.0,204.9 526.5,204.2 527.0,203.5 527.5,202.9 528.0,202.3 528.5,201.8 529.0,201.3 529.5,200.8 530.0,200.4 530.5,200.0 531.0,199.6 531.5,199.2 532.0,198.9 532.5,198.6 533.0,198.3 533.5,198.1 534.0,197.9 534.5,197.6 535.0,197.4 535.5,197.3 536.0,197.1 536.5,196.9 537.0,196.8 537.5,196.6 538.0,196.5 538.5,196.4 539.0,196.3 539.5,196.2 540.0,196.1 540.5,196.0 541.0,196.0 541.5,195.9 542.0,195.8 542.5,195.8 543.0,195.7 543.5,195.7 544.0,195.7 544.5,195.6 545.0,195.6 545.5,195.6 546.0,195.5 546.5,195.5 547.0,195.5 547.5,195.5 548.0,195.5 548.5,195.5 549.0,195.5 549.5,195.5 550.0,195.5 550.5,195.5 551.0,195.5 551.5,195.5 552.0,195.6 552.5,195.6 553.0,195.6 553.5,195.6 554.0,195.7 554.5,195.7 555.0,195.8 555.5,195.8 556.0,195.9 556.5,196.0 557.0,196.0 557.5,196.1 558.0,196.2 558.5,196.3 559.0,196.4 559.5,196.5 560.0,196.6 560.5,196.7 561.0,196.9 561.5,197.0 562.0,197.2 562.5,197.4 563.0,197.6 563.5,197.8 564.0,198.0 564.5,198.3 565.0,198.6 565.5,198.9 566.0,199.2 566.5,199.5 567.0,199.9 567.5,200.3 568.0,200.7 568.5,201.2 569.0,201.7 569.5,202.2 570.0,202.8 570.5,203.4 571.0,204.1 571.5,204.8 572.0,205.5 572.5,206.4 573.0,207.2 573.5,208.2 574.0,209.2 574.5,210.2 575.0,211.4 575.5,212.6 576.0,213.9 576.5,215.3 577.0,216.8 577.5,218.3 578.0,220.0 578.5,221.7 579.0,223.6 579.5,225.5 580.0,227.6 580.5,229.8 581.0,232.1 581.5,234.6 582.0,237.1 582.5,239.8 583.0,242.7 583.5,245.7 584.0,248.8 584.5,252.0 585.0,255.5 585.5,259.0 586.0,262.8 586.5,266.6 587.0,270.7 587.5,274.9 588.0,279.2 588.5,283.8 589.0,288.5 589.5,293.3 590.0,298.4 590.5,303.5 591.0,308.9 591.5,314.4 592.0,320.1 592.5,326.0 593.0,332.0 593.5,338.1 594.0,344.4 594.5,350.9 595.0,357.5 595.5,364.3 596.0,371.2 596.5,378.2 597.0,385.4 597.5,392.7 598.0,400.2 598.5,407.7 599.0,415.4 599.5,423.2 600.0,431.1 600.5,439.1 601.0,447.2 601.5,455.4 602.0,463.7 602.5,472.1 603.0,480.5 603.5,489.1 604.0,497.7 604.5,506.3 605.0,515.1 605.5,523.9 606.0,532.7 606.5,541.6 607.0,550.5 607.5,559.5 608.0,568.5 608.5,577.6 609.0,586.7 609.5,595.8 610.0,604.9 610.5,614.0 611.0,623.2 611.5,632.4 612.0,641.6 612.5,650.8 613.0,660.0 613.5,669.2 614.0,678.4 614.5,687.6 615.0,696.8 615.5,706.0 616.0,715.2 616.5,717.0 617.0,717.0 617.5,717.0 618.0,717.0 618.5,717.0 619.0,717.0 619.5,717.0 620.0,717.0 620.5,717.0 621.0,717.0 621.5,717.0 622.0,717.0 622.5,717.0 623.0,717.0 623.5,717.0 624.0,717.0 624.5,717.0 625.0,717.0 625.5,717.0 626.0,717.0 626.5,717.0 627.0,717.0 627.5,717.0 628.0,717.0 628.5,717.0 629.0,717.0 629.5,717.0 630.0,717.0 630.5,717.0 631.0,717.0 631.5,717.0 632.0,717.0 632.5,717.0 633.0,717.0 633.5,717.0 634.0,717.0 634.5,717.0 635.0,717.0 635.5,717.0 636.0,717.0 636.5,717.0 637.0,717.0 637.5,717.0 638.0,717.0 638.5,717.0 639.0,717.0 639.5,717.0 640.0,717.0 640.5,717.0 641.0,717.0 641.5,717.0 642.0,717.0 642.5,717.0 643.0,717.0 643.5,717.0 644.0,717.0 644.5,717.0 645.0,717.0 645.5,717.0 646.0,717.0 646.5,717.0 647.0,717.0 647.5,717.0 648.0,717.0 648.5,717.0 649.0,717.0 649.5,717.0 650.0,717.0 650.5,717.0 651.0,717.0 651.5,717.0 652.0,717.0 652.5,717.0 653.0,717.0 653.5,717.0 654.0,717.0 654.5,717.0 655.0,717.0 655.5,717.0 656.0,717.0 656.5,717.0 657.0,717.0 657.5,717.0 658.0,717.0 658.5,717.0 659.0,717.0 659.5,717.0 660.0,717.0 660.5,717.0 661.0,717.0 661.5,717.0 662.0,717.0 662.5,717.0 663.0,717.0 663.5,717.0 664.0,717.0 664.5,717.0 665.0,717.0 665.5,717.0 666.0,717.0 666.5,717.0 667.0,717.0 667.5,717.0 668.0,717.0 668.5,717.0 669.0,717.0 669.5,717.0 670.0,717.0 670.5,717.0 671.0,717.0 671.5,717.0 672.0,717.0 672.5,717.0 673.0,717.0 673.5,717.0 674.0,717.0 674.5,717.0 675.0,717.0 675.5,717.0 676.0,717.0 676.5,717.0 677.0,717.0 677.5,717.0 678.0,717.0 678.5,717.0 679.0,717.0 679.5,717.0 680.0,717.0 680.5,717.0 681.0,717.0 681.5,717.0 682.0,717.0 682.5,717.0 683.0,717.0 683.5,717.0 684.0,717.0 684.5,717.0 685.0,717.0 685.5,717.0 686.0,717.0 686.5,717.0 687.0,717.0 687.5,717.0 688.0,717.0 688.5,717.0 689.0,717.0 689.5,717.0 690.0,717.0 690.5,717.0 691.0,717.0 691.5,717.0 692.0,717.0 692.5,717.0 693.0,717.0 693.5,717.0 694.0,717.0 694.5,717.0 695.0,717.0 695.5,717.0 696.0,717.0 696.5,717.0 697.0,717.0 697.5,717.0 698.0,717.0 698.5,717.0 699.0,717.0 699.5,717.0 700.0,717.0 700.5,717.0 701.0,717.0 701.5,717.0 702.0,717.0 702.5,717.0 703.0,717.0 703.5,717.0 704.0,717.0 704.5,717.0 705.0,717.0 705.5,717.0 706.0,717.0 706.5,717.0 707.0,717.0 707.5,717.0 708.0,717.0 708.5,717.0 709.0,717.0 709.5,717.0 710.0,717.0 710.5,717.0 711.0,717.0 711.5,717.0 712.0,717.0 712.5,717.0 713.0,717.0 713.5,717.0 714.0,717.0 714.5,717.0 715.0,717.0 715.5,717.0 716.0,717.0 716.5,717.0 717.0,717.0 717.5,717.0 718.0,717.0 718.5,717.0 719.0,717.0 719.5,717.0 720.0,717.0 720.5,717.0 721.0,717.0 721.5,717.0 722.0,717.0 722.5,717.0 723.0,717.0 723.5,717.0 724.0,717.0 724.5,717.0 725.0,717.0 725.5,717.0 726.0,717.0 726.5,717.0 727.0,717.0 727.5,717.0 728.0,717.0 728.5,717.0 729.0,717.0 729.5,717.0 730.0,717.0 730.5,717.0 731.0,717.0 731.5,717.0 732.0,717.0 732.5,717.0 733.0,717.0 733.5,717.0 734.0,717.0 734.5,717.0 735.0,717.0 735.5,717.0 736.0,717.0 736.5,717.0 737.0,717.0 737.5,717.0 738.0,717.0 738.5,717.0 739.0,717.0 739.5,717.0 740.0,717.0 740.5,717.0 741.0,717.0 741.5,717.0 742.0,717.0 742.5,717.0 743.0,717.0 743.5,717.0 744.0,717.0 744.5,717.0 745.0,717.0 745.5,717.0 746.0,717.0 746.5,717.0 747.0,717.0 747.5,717.0 748.0,717.0 748.5,717.0 749.0,717.0 749.5,717.0 750.0,717.0 750.5,717.0 751.0,717.0 751.5,717.0 752.0,717.0 752.5,717.0 753.0,717.0 753.5,717.0 754.0,717.0 754.5,717.0 755.0,717.0 755.5,717.0 756.0,717.0 756.5,717.0 757.0,717.0 757.5,717.0 758.0,717.0 758.5,717.0 759.0,717.0 759.5,717.0 760.0,717.0 760.5,717.0 761.0,717.0 761.5,717.0 762.0,717.0 762.5,717.0 763.0,717.0 763.5,717.0 764.0,717.0 764.5,717.0 765.0,717.0 765.5,717.0 766.0,717.0 766.5,717.0 767.0,717.0 767.5,717.0 768.0,717.0 768.5,717.0 769.0,717.0 769.5,717.0 770.0,717.0 770.5,717.0 771.0,717.0 771.5,717.0 772.0,717.0 772.5,717.0 773.0,717.0 773.5,717.0 774.0,717.0 774.5,717.0 775.0,717.0 775.5,717.0 776.0,717.0 776.5,717.0 777.0,717.0 777.5,717.0 778.0,717.0 778.5,717.0 779.0,717.0 779.5,717.0 780.0,717.0 780.5,717.0 781.0,717.0 781.5,717.0 782.0,717.0 782.5,717.0 783.0,717.0 783.5,717.0 784.0,717.0 784.5,717.0 785.0,717.0 785.5,717.0 786.0,717.0 786.5,717.0 787.0,717.0 787.5,717.0 788.0,717.0 788.5,717.0 789.0,717.0 789.5,717.0 790.0,717.0 790.5,717.0 791.0,717.0 791.5,717.0 792.0,717.0 792.5,717.0 793.0,717.0 793.5,717.0 794.0,717.0 794.5,717.0 795.0,717.0 795.5,717.0 796.0,717.0 796.5,717.0 797.0,717.0 797.5,717.0 798.0,717.0 798.5,717.0 799.0,717.0 799.5,717.0 800.0,717.0 800.5,717.0 801.0,717.0 801.5,717.0 802.0,717.0 802.5,717.0 803.0,717.0 803.5,717.0 804.0,717.0 804.5,717.0 805.0,717.0 805.5,717.0 806.0,717.0 806.5,717.0 807.0,717.0 807.5,717.0 808.0,717.0 808.5,717.0 809.0,717.0 809.5,717.0 810.0,717.0 810.5,717.0 811.0,717.0 811.5,717.0 812.0,717.0 812.5,717.0 813.0,717.0 813.5,717.0 814.0,717.0 814.5,717.0 815.0,717.0 815.5,717.0 816.0,717.0 816.5,717.0 817.0,717.0 817.5,717.0 818.0,717.0 818.5,717.0 819.0,717.0 819.5,717.0 820.0,717.0 820.5,717.0 821.0,717.0 821.5,717.0 822.0,717.0 822.5,717.0 823.0,717.0 823.5,717.0 824.0,717.0 824.5,717.0 825.0,717.0 825.5,717.0 826.0,717.0 826.5,717.0 827.0,717.0 827.5,717.0 828.0,717.0 828.5,717.0 829.0,717.0 829.5,717.0 830.0,717.0 830.5,717.0 831.0,717.0 831.5,717.0 832.0,717.0 832.5,717.0 833.0,717.0 833.5,717.0 834.0,717.0 834.5,717.0 835.0,717.0 835.5,717.0 836.0,717.0 836.5,717.0 837.0,717.0 837.5,717.0 838.0,717.0 838.5,717.0 839.0,717.0 839.5,717.0 840.0,717.0 840.5,717.0 841.0,717.0 841.5,717.0 842.0,717.0 842.5,717.0 843.0,717.0 843.5,717.0 844.0,717.0 844.5,717.0 845.0,717.0 845.5,717.0 846.0,717.0 846.5,717.0 847.0,717.0 847.5,717.0 848.0,717.0 848.5,717.0 849.0,717.0 849.5,717.0 850.0,717.0 850.5,717.0 851.0,717.0 851.5,717.0 852.0,717.0 852.5,717.0 853.0,717.0 853.5,717.0 854.0,717.0 854.5,717.0 855.0,717.0 855.5,717.0 856.0,717.0 856.5,717.0 857.0,717.0 857.5,717.0 858.0,717.0 858.5,717.0 859.0,717.0 859.5,717.0 860.0,717.0 860.5,717.0 861.0,717.0 861.5,717.0 862.0,717.0 862.5,717.0 863.0,717.0 863.5,717.0 864.0,717.0 864.5,717.0 865.0,717.0 865.5,717.0 866.0,717.0 866.5,717.0 867.0,717.0 867.5,717.0 868.0,717.0 868.5,717.0 869.0,717.0 869.5,717.0 870.0,717.0 870.5,717.0 871.0,717.0 871.5,717.0 872.0,717.0 872.5,717.0 873.0,717.0 873.5,717.0 874.0,717.0 874.5,717.0 875.0,717.0 875.5,717.0 876.0,717.0 876.5,717.0 877.0,717.0 877.5,717.0 878.0,717.0 878.5,717.0 879.0,717.0 879.5,717.0 880.0,717.0 880.5,717.0 881.0,717.0 881.5,717.0 882.0,717.0 882.5,717.0 883.0,717.0 883.5,717.0 884.0,717.0 884.5,717.0 885.0,717.0 885.5,717.0 886.0,717.0 886.5,717.0 887.0,717.0 887.5,717.0 888.0,717.0 888.5,717.0 889.0,717.0 889.5,717.0 890.0,717.0 890.5,717.0 891.0,717.0 891.5,717.0 892.0,717.0 892.5,717.0 893.0,717.0 893.5,717.0 894.0,717.0 894.5,717.0 895.0,717.0 895.5,717.0 896.0,717.0 896.5,717.0 897.0,717.0 897.5,717.0 898.0,717.0 898.5,717.0 899.0,717.0 899.5,717.0 900.0,717.0 900.5,717.0 901.0,717.0 901.5,717.0 902.0,717.0 902.5,717.0 903.0,717.0 903.5,717.0 904.0,717.0 904.5,717.0 905.0,717.0 905.5,717.0 906.0,717.0 906.5,717.0 907.0,717.0 907.5,717.0 908.0,717.0 908.5,717.0 909.0,717.0 909.5,717.0 910.0,717.0 910.5,717.0 911.0,717.0 911.5,717.0 912.0,717.0 912.5,717.0 913.0,717.0 913.5,717.0 914.0,717.0 914.5,717.0 915.0,717.0 915.5,717.0 916.0,717.0 916.5,717.0 917.0,717.0 917.5,717.0 918.0,717.0 918.5,717.0 919.0,717.0 919.5,717.0 920.0,717.0 920.5,717.0 921.0,717.0 921.5,717.0 922.0,717.0 922.5,717.0 923.0,717.0 923.5,717.0 924.0,717.0 924.5,717.0 925.0,717.0 925.5,717.0 926.0,717.0 926.5,717.0 927.0,717.0 927.5,717.0 928.0,717.0 928.5,717.0 929.0,717.0 929.5,717.0 930.0,717.0 930.5,717.0 931.0,717.0 931.5,717.0 932.0,717.0 932.5,717.0 933.0,717.0 933.5,717.0 934.0,717.0 934.5,717.0 935.0,717.0 935.5,717.0 936.0,717.0 936.5,717.0 937.0,717.0 937.5,717.0 938.0,717.0 938.5,717.0 939.0,717.0 939.5,717.0 940.0,717.0 940.5,717.0 941.0,717.0 941.5,717.0 942.0,717.0 942.5,717.0 943.0,717.0 943.5,717.0 944.0,717.0 944.5,717.0 945.0,717.0 945.5,717.0 946.0,717.0 946.5,717.0 947.0,717.0 947.5,717.0 948.0,717.0 948.5,717.0 949.0,717.0 949.5,717.0 950.0,717.0 950.5,717.0 951.0,717.0 951.5,717.0 952.0,717.0 952.5,717.0 953.0,717.0 953.5,717.0 954.0,717.0 954.5,717.0 955.0,717.0 955.5,717.0 956.0,717.0 956.5,717.0 957.0,717.0 957.5,717.0 958.0,717.0 958.5,717.0 959.0,717.0 959.5,717.0 960.0,717.0 960.5,717.0 961.0,717.0 961.5,717.0 962.0,717.0 962.5,717.0 963.0,717.0 963.5,717.0 964.0,717.0 964.5,717.0 965.0,717.0 965.5,717.0 966.0,717.0 966.5,717.0 967.0,717.0 967.5,717.0 968.0,717.0 968.5,717.0 969.0,717.0 969.5,717.0 970.0,717.0 970.5,717.0 971.0,717.0 971.5,717.0 972.0,717.0 972.5,717.0 973.0,717.0 973.5,717.0 974.0,717.0 974.5,717.0 975.0,717.0 975.5,717.0 976.0,717.0 976.5,717.0 977.0,717.0 977.5,717.0 978.0,717.0 978.5,717.0 979.0,717.0 979.5,717.0 980.0,717.0 980.5,717.0 981.0,717.0 981.5,717.0 982.0,717.0 982.5,717.0 983.0,717.0 983.5,717.0 984.0,717.0 984.5,717.0 985.0,717.0 985.5,717.0 986.0,717.0 986.5,717.0 987.0,717.0 987.5,717.0 988.0,717.0 988.5,717.0 989.0,717.0 989.5,717.0 990.0,717.0 990.5,717.0 991.0,717.0 991.5,717.0 992.0,717.0 992.5,717.0 993.0,717.0 993.5,717.0 994.0,717.0 994.5,717.0 995.0,717.0 995.5,717.0 996.0,717.0 996.5,717.0 997.0,717.0 997.5,717.0 998.0,717.0 998.5,717.0 999.0,717.0 999.5,717.0 1000.0,717.0 1000.5,717.0 1001.0,717.0 1001.5,717.0 1002.0,717.0 1002.5,717.0 1003.0,717.0 1003.5,717.0 1004.0,717.0 1004.5,717.0 1005.0,717.0 1005.5,717.0 1006.0,717.0 1006.5,717.0 1007.0,717.0 1007.5,717.0 1008.0,717.0 1008.5,717.0 1009.0,717.0" fill="none" stroke="#e07af6" stroke-width="1" shape-rendering="crispEdges"/>
<polyline points="87.0,134.5 102.6,134.5 124.7,134.5 150.3,134.5 176.4,134.5 200.0,134.5 220.8,134.5 240.9,134.5 260.6,134.5 280.2,134.5 300.0,134.6 320.8,134.7 342.4,134.9 363.6,135.2 383.2,135.5 400.0,135.8 413.6,136.2 424.8,136.6 434.2,137.0 442.4,137.6 450.0,138.3 456.8,139.1 462.3,139.9 466.9,140.9 471.0,142.1 475.0,143.6 478.8,145.6 482.2,148.0 485.1,150.5 487.7,153.1 490.0,155.5 491.8,157.6 493.0,159.4 494.0,161.3 494.9,163.4 496.0,166.0 497.2,169.2 498.4,172.9 499.7,176.9 500.9,181.0 502.0,185.0 503.1,188.8 504.1,192.4 505.0,196.2 506.0,200.3 507.0,205.0 508.0,210.5 509.1,216.7 510.1,223.2 511.1,229.4 512.0,235.0 512.7,239.7 513.4,243.9 513.9,247.8 514.5,251.8 515.0,256.0 515.5,260.5 516.0,265.2 516.5,269.9 517.0,274.9 517.5,280.0 518.0,284.9 518.6,289.7 519.2,294.8 519.8,300.8 520.5,308.5 521.3,318.6 522.3,330.7 523.2,343.6 524.1,355.9 524.8,366.4 525.3,375.0 525.7,382.6 526.1,389.3 526.3,395.1 526.5,400.0 526.6,403.8 526.6,406.3 526.5,408.1 526.4,409.8 526.5,412.0 526.7,414.7 526.9,417.5 527.2,420.3 527.6,423.2 527.9,426.0 528.2,429.2 528.6,432.8 529.0,436.1 529.4,438.7 529.9,440.0 530.4,439.6 531.0,437.8 531.7,435.2 532.3,432.4 532.9,430.0 533.5,427.7 534.1,425.2 534.7,422.7 535.3,420.6 535.9,419.0 536.5,418.0 537.1,417.5 537.7,417.4 538.3,417.6 538.9,418.0 539.5,418.6 540.1,419.3 540.6,420.4 541.2,421.9 541.9,424.0 542.7,426.9 543.5,430.4 544.4,434.4 545.2,438.3 545.9,442.0 546.5,445.3 547.0,448.4 547.5,451.6 547.9,454.7 548.3,458.0 548.6,461.5 548.9,465.2 549.2,468.8 549.5,472.5 549.9,476.0 550.4,479.5 551.0,483.0 551.6,486.3 552.2,489.4 552.9,492.0 553.7,494.0 554.5,495.6 555.3,496.9 556.1,498.0 556.9,499.0 557.6,499.7 558.2,500.1 558.7,500.3 559.3,500.9 559.9,502.0 560.5,503.9 561.2,506.4 561.8,509.1 562.4,511.8 562.9,514.0 563.3,516.2 563.6,518.5 563.8,520.5 564.0,521.5 564.3,521.0 564.6,518.5 564.9,514.4 565.3,509.5 565.6,504.4 565.9,500.0 566.1,496.4 566.3,493.1 566.5,489.8 566.7,486.4 567.0,482.7 567.3,478.7 567.7,474.6 568.0,470.3 568.4,465.5 568.7,460.0 569.0,453.5 569.2,446.0 569.5,438.2 569.7,430.6 569.9,424.0 570.1,418.6 570.3,414.0 570.5,409.7 570.7,405.2 570.9,400.0 571.1,394.3 571.3,388.4 571.5,382.1 571.9,374.8 572.4,366.4 573.2,355.9 574.3,343.6 575.5,330.7 576.7,318.6 577.6,308.5 578.3,300.9 578.8,295.1 579.2,290.1 579.6,285.3 580.2,280.0 580.9,274.0 581.6,267.9 582.4,261.8 583.2,255.8 584.0,250.0 584.7,244.3 585.5,238.6 586.2,233.1 586.9,228.0 587.5,223.6 588.1,220.1 588.5,217.3 589.0,214.9 589.5,212.6 590.0,210.0 590.6,207.0 591.2,203.9 591.9,200.7 592.5,197.7 593.1,195.0 593.6,192.6 594.1,190.5 594.6,188.6 595.1,186.8 595.6,185.0 596.2,183.4 596.8,182.0 597.4,180.6 598.0,179.1 598.7,177.4 599.4,175.4 600.1,173.1 600.8,170.8 601.6,168.4 602.5,166.2 603.6,164.0 604.9,161.9 606.2,159.8 607.5,157.9 608.7,156.2 609.7,154.9 610.7,153.9 611.6,153.0 612.6,152.2 613.7,151.2 615.0,150.1 616.5,148.9 618.0,147.7 619.6,146.6 621.2,145.6 622.9,144.7 624.6,143.9 626.3,143.2 628.1,142.5 630.0,141.9 631.8,141.4 633.7,140.9 635.6,140.5 637.7,140.1 640.0,139.7 642.5,139.2 645.2,138.8 648.0,138.3 651.3,137.9 655.0,137.5 658.5,137.2 661.6,136.9 665.6,136.6 671.3,136.4 680.0,136.2 692.3,136.0 707.6,135.9 724.6,135.8 742.5,135.7 760.0,135.6 777.7,135.5 796.2,135.5 815.0,135.4 833.1,135.4 850.0,135.3 865.0,135.2 878.5,135.0 891.6,134.9 905.1,134.7 920.0,134.6 938.0,134.5 958.5,134.5 978.9,134.5 996.6,134.5 1009.0,134.5" fill="none" stroke="#5cfb3c" stroke-width="1" shape-rendering="crispEdges"/>
<path d="M548.5 143.5 L539.5 158.5 L557.5 158.5 Z" fill="none" stroke="#08a6ae" stroke-width="1.2"/>
<path d="M546.5 167.5 L549.6 165 V178.5" fill="none" stroke="#08a6ae" stroke-width="1.3"/>
<path d="M179.5 451.5 L170.5 466.5 L188.5 466.5 Z" fill="none" stroke="#08a6ae" stroke-width="1.2"/><text x="180.5" y="487.0" fill="#08a6ae" font-size="15" text-anchor="middle">2</text>
<path d="M917.5 446.5 L908.5 432.5 L926.5 432.5 Z" fill="none" stroke="#08a6ae" stroke-width="1.2"/><text x="918.5" y="428.0" fill="#08a6ae" font-size="15" text-anchor="middle">3</text>
<path d="M548.5 195.5 L539.5 181.5 L557.5 181.5 Z" fill="none" stroke="#e07af6" stroke-width="1.2"/>
<path d="M487.3 634.6 L478.3 649.6 L496.3 649.6 Z" fill="none" stroke="#e07af6" stroke-width="1.2"/><text x="488.3" y="669.0" fill="#e07af6" font-size="15" text-anchor="middle">2</text>
<path d="M609.4 603.3 L600.4 618.3 L618.4 618.3 Z" fill="none" stroke="#e07af6" stroke-width="1.2"/><text x="610.4" y="638.0" fill="#e07af6" font-size="15" text-anchor="middle">3</text>
<path d="M548.5 459.0 L539.5 445.0 L557.5 445.0 Z" fill="none" stroke="#5cfb3c" stroke-width="1.2"/>
<path d="M546.8 432 L549.8 430 V442" fill="none" stroke="#5cfb3c" stroke-width="1.3"/>
<path d="M548 458 L550 456.5 V468" fill="none" stroke="#a6760f" stroke-width="1.3"/>
<path d="M548.5 486.0 L539.5 472.0 L557.5 472.0 Z" fill="none" stroke="#a6760f" stroke-width="1.2"/>
<path d="M77.8 127 L87.5 133.5 L77.8 140 Z" fill="#0aa0a0"/>
<path d="M1020 127 L1009.5 133.5 L1020 140 Z" fill="#0aa0a0"/>
<path d="M1020 418.8 L1009.2 425.5 L1020 432.2 Z" fill="#e07af6"/>
<text x="69.3" y="149.3" font-size="16" text-anchor="end" fill="#000">0</text>
<text x="69.3" y="197.3" font-size="16" text-anchor="end" fill="#000">-10</text>
<text x="69.3" y="255.8" font-size="16" text-anchor="end" fill="#000">-20</text>
<text x="69.3" y="314.3" font-size="16" text-anchor="end" fill="#000">-30</text>
<text x="69.3" y="372.8" font-size="16" text-anchor="end" fill="#000">-40</text>
<text x="69.3" y="431.3" font-size="16" text-anchor="end" fill="#000">-50</text>
<text x="69.3" y="489.8" font-size="16" text-anchor="end" fill="#000">-60</text>
<text x="69.3" y="547.8" font-size="16" text-anchor="end" fill="#000">-70</text>
<text x="69.3" y="606.3" font-size="16" text-anchor="end" fill="#000">-80</text>
<text x="69.3" y="664.8" font-size="16" text-anchor="end" fill="#000">-90</text>
<text x="69.3" y="711.3" font-size="16" text-anchor="end" fill="#000">-100</text>
<text x="87.2" y="100.8" font-size="16" fill="#a6760f">Tr</text><text x="109.5" y="100.8" font-size="16" fill="#a6760f">1</text><text x="130.5" y="100.8" font-size="16" fill="#a6760f" xml:space="preserve">S11 LogM 6.000dB/  0.00dB</text>
<text x="87.2" y="126.6" font-size="16" fill="#e07af6">Tr</text><text x="109.5" y="126.6" font-size="16" fill="#e07af6">3</text><text x="130.5" y="126.6" font-size="16" fill="#e07af6" xml:space="preserve">S12 LogM 1.000dB/  -5.61dB</text>
<rect x="553" y="85" width="33" height="20" fill="#06a0a0"/><text x="554.3" y="100.8" font-size="16" fill="#000">Tr</text><text x="576.6" y="100.8" font-size="16" fill="#000">2</text><text x="597.6" y="100.8" font-size="16" fill="#08a6ae" xml:space="preserve">S21 LogM 10.00dB/  0.00dB</text>
<text x="554.3" y="126.6" font-size="16" fill="#5cfb3c">Tr</text><text x="576.6" y="126.6" font-size="16" fill="#5cfb3c">4</text><text x="597.6" y="126.6" font-size="16" fill="#5cfb3c" xml:space="preserve">S22 LogM 6.000dB/  0.00dB</text>
<text x="712" y="194.6" font-size="16" fill="#a6760f" text-anchor="end">1:</text>
<text x="753" y="194.6" font-size="16" fill="#a6760f">6.834</text>
<text x="801.5" y="194.6" font-size="16" fill="#a6760f">GHz</text>
<text x="916" y="194.6" font-size="16" fill="#a6760f" text-anchor="end">-36.45</text>
<text x="920.5" y="194.6" font-size="16" fill="#a6760f">dB</text>
<text x="712" y="214.6" font-size="16" fill="#08a6ae" text-anchor="end">1:</text>
<text x="753" y="214.6" font-size="16" fill="#08a6ae">6.834</text>
<text x="801.5" y="214.6" font-size="16" fill="#08a6ae">GHz</text>
<text x="916" y="214.6" font-size="16" fill="#08a6ae" text-anchor="end">-1.68</text>
<text x="920.5" y="214.6" font-size="16" fill="#08a6ae">dB</text>
<text x="712" y="234.6" font-size="16" fill="#08a6ae" text-anchor="end">2:</text>
<text x="753" y="234.6" font-size="16" fill="#08a6ae">6.774</text>
<text x="801.5" y="234.6" font-size="16" fill="#08a6ae">GHz</text>
<text x="916" y="234.6" font-size="16" fill="#08a6ae" text-anchor="end">-54.50</text>
<text x="920.5" y="234.6" font-size="16" fill="#08a6ae">dB</text>
<text x="712" y="254.6" font-size="16" fill="#08a6ae" text-anchor="end">3:</text>
<text x="753" y="254.6" font-size="16" fill="#08a6ae">6.894</text>
<text x="801.5" y="254.6" font-size="16" fill="#08a6ae">GHz</text>
<text x="916" y="254.6" font-size="16" fill="#08a6ae" text-anchor="end">-53.90</text>
<text x="920.5" y="254.6" font-size="16" fill="#08a6ae">dB</text>
<text x="712" y="274.6" font-size="16" fill="#e07af6" text-anchor="end">1:</text>
<text x="753" y="274.6" font-size="16" fill="#e07af6">6.834</text>
<text x="801.5" y="274.6" font-size="16" fill="#e07af6">GHz</text>
<text x="916" y="274.6" font-size="16" fill="#e07af6" text-anchor="end">-1.68</text>
<text x="920.5" y="274.6" font-size="16" fill="#e07af6">dB</text>
<text x="712" y="294.6" font-size="16" fill="#e07af6" text-anchor="end">2:</text>
<text x="753" y="294.6" font-size="16" fill="#e07af6">6.824</text>
<text x="801.5" y="294.6" font-size="16" fill="#e07af6">GHz</text>
<text x="916" y="294.6" font-size="16" fill="#e07af6" text-anchor="end">-9.18</text>
<text x="920.5" y="294.6" font-size="16" fill="#e07af6">dB</text>
<text x="712" y="314.6" font-size="16" fill="#e07af6" text-anchor="end">3:</text>
<text x="753" y="314.6" font-size="16" fill="#e07af6">6.844</text>
<text x="801.5" y="314.6" font-size="16" fill="#e07af6">GHz</text>
<text x="916" y="314.6" font-size="16" fill="#e07af6" text-anchor="end">-8.65</text>
<text x="920.5" y="314.6" font-size="16" fill="#e07af6">dB</text>
<text x="712" y="334.6" font-size="16" fill="#5cfb3c" text-anchor="end">1:</text>
<text x="753" y="334.6" font-size="16" fill="#5cfb3c">6.834</text>
<text x="801.5" y="334.6" font-size="16" fill="#5cfb3c">GHz</text>
<text x="916" y="334.6" font-size="16" fill="#5cfb3c" text-anchor="end">-33.74</text>
<text x="920.5" y="334.6" font-size="16" fill="#5cfb3c">dB</text>
<text x="687" y="254" font-size="13" fill="#08a6ae">&gt;</text>
<path d="M732.5 180 V340 M825.5 180 V340 M917.5 180 V340 M680 191.5 H950 M680 249.5 H950 M680 308.5 H950" stroke="#2a2a2a" stroke-width="1" fill="none" shape-rendering="crispEdges"/>
<rect x="16" y="723" width="27" height="20" fill="#c8c8c8"/>
<text x="29.5" y="739.5" font-size="16" fill="#000" text-anchor="middle">1</text>
<text x="87.3" y="742" font-size="16" fill="#000">&gt;Ch1:</text>
<text x="137.5" y="742" font-size="16" fill="#000">Start</text>
<text x="278.3" y="742" font-size="16" fill="#000" text-anchor="end">6.75900 GHz</text>
<rect x="285" y="734" width="22" height="2" fill="#a6760f"/>
<rect x="312" y="734" width="22" height="2" fill="#08a6ae"/>
<rect x="339" y="734" width="22" height="2" fill="#e07af6"/>
<rect x="366" y="734" width="22" height="2" fill="#5cfb3c"/>
<text x="507.5" y="742" font-size="16" fill="#000">RF</text>
<text x="612.5" y="742" font-size="16" fill="#000" text-anchor="end">0.00 dBm</text>
<text x="871" y="742" font-size="16" fill="#000">Stop</text>
<text x="1007.5" y="742" font-size="16" fill="#000" text-anchor="end">6.90900 GHz</text>
</svg>

<div id="panel" class="a">
 <div id="hdr" class="a"><span class="a" style="left:13px;top:10px;font-size:16px;color:#fff">Avg BW</span>
  <div class="a" style="left:216px;top:8px;width:24px;height:23px;border:1px solid #c8ccd4;border-radius:4px;background:radial-gradient(ellipse at 50% 100%,#3d8a80,#2a5e66 70%);overflow:hidden">
   <div class="a" style="left:2px;top:2px;width:18px;height:6px;background:#8d9cab"></div>
   <svg class="a" style="left:4px;top:4px" width="14" height="14"><path d="M3 3 L11 11 M11 3 L3 11" stroke="#fff" stroke-width="2.2"/></svg>
  </div>
 </div>
 <div id="tabs" class="a"></div>
<div class="btn" style="left:5px;top:47px;width:37px;height:72px"><div class="a" style="left:8px;top:32px;width:21px;height:11px;border-radius:3px;background:#8a8a8e;border:1px solid #4a4a4e"></div></div><div class="btn" style="left:47px;top:47px;width:107px;height:72px"><div class="a" style="left:0;top:10px;width:107px">Averaging</div><div class="val" style="top:43px">1</div></div><div class="btn" style="left:5px;top:130px;width:149px;height:72px"><div class="a" style="left:0;top:17px;width:149px;line-height:19px">Averaging<br>Restart</div></div><div class="btn" style="left:5px;top:213px;width:149px;height:72px"><div class="a" style="left:0;top:10px;width:149px">Average Type</div><div class="a" style="left:6px;top:43px;width:137px;height:21px;border:1px solid #c8c8cc;font-size:12px;line-height:19px"><div class="a" style="left:0;top:0;width:67px;height:19px;background:#dcdcde;color:#a4a4a8">point</div><div class="a" style="left:67px;top:0;width:68px;height:19px;background:#e6e6e8;color:#333">SWEEP</div></div></div><div class="emp" style="left:4px;top:295px;width:150px;height:74px"></div><div class="btn" style="left:5px;top:379px;width:149px;height:71px"><div class="a" style="left:0;top:10px;width:149px">IF Bandwidth</div><div class="val" style="left:6px;width:137px;top:43px">1 kHz</div></div><div class="btn" style="left:5px;top:463px;width:149px;height:71px"><div class="a" style="left:0;top:10px;width:135px">IF BW Shape</div><div class="a" style="left:128px;top:12px;font-size:12px;color:#555">&#9660;</div><div class="val" style="left:6px;width:137px;top:43px">Standard</div></div><div class="btn" style="left:5px;top:546px;width:149px;height:72px"><div class="a" style="left:0;top:10px;width:149px">LF Auto BW</div><div class="a" style="left:6px;top:43px;width:137px;height:21px;border:1px solid #c8c8cc;font-size:12px;line-height:19px"><div class="a" style="left:0;top:0;width:67px;height:19px;background:#e6e6e8;color:#333">ON</div><div class="a" style="left:67px;top:0;width:68px;height:19px;background:#dcdcde;color:#a4a4a8">off</div></div></div><div class="emp" style="left:4px;top:628px;width:150px;height:74px"></div>
</div>

<div class="a" style="left:1187px;top:99px;width:90px;text-align:center;font-size:16px;color:#eee">Main</div>
<div class="a" style="left:1187px;top:162px;width:90px;text-align:center;font-size:16px;color:#ddd">Smoothing</div>
<div class="a" style="left:1187px;top:202px;width:89px;height:1px;background:#3a3a3a"></div>
<div class="a" style="left:1187px;top:214px;width:90px;text-align:center;font-size:16px;line-height:20px;color:#ddd">Delay<br>Aperture</div>
<div class="a" style="left:1187px;top:265px;width:89px;height:1px;background:#3a3a3a"></div>

<div class="a" style="left:0;top:776px;width:1280px;height:1px;background:#b4b4b4"></div>
<div class="a" style="left:0;top:777px;width:1280px;height:23px;background:#d4d4d4"></div>
<div class="a" style="left:0;top:797px;width:1280px;height:1px;background:#bcbcbc"></div><div class="a" style="left:0;top:800px;width:1280px;height:1px;background:#1a1a1a"></div><div class="a" style="left:0;top:749px;width:1021px;height:1px;background:#e4e4e4"></div>
<div class="sb" style="left:4px;width:47px;">Tr 2</div><div class="sb" style="left:56px;width:52px;">Ch 1</div><div class="sb" style="left:113px;width:60px;">IntTrig</div><div class="sb" style="left:178px;width:52px;">Swp *</div><div class="sb" style="left:235px;width:76px;">BW=1k</div><div class="sb" style="left:316px;width:82px;">C&nbsp; 2-Port</div><div class="sb" style="left:403px;width:51px;color:#a8a8a8">SrcCal</div><div class="sb" style="left:459px;width:39px;color:#a8a8a8">Fix</div><div class="sb" style="left:503px;width:48px;color:#a8a8a8">Pulse</div><div class="sb" style="left:556px;width:720px;"></div>
<div class="a" style="left:207px;top:303px;font-family:'Liberation Serif',serif;font-weight:bold;font-size:66px;letter-spacing:6.2px;color:rgba(0,0,0,0.09);white-space:nowrap;line-height:80px">www.xahxmicrowave.com</div>
</body></html>
